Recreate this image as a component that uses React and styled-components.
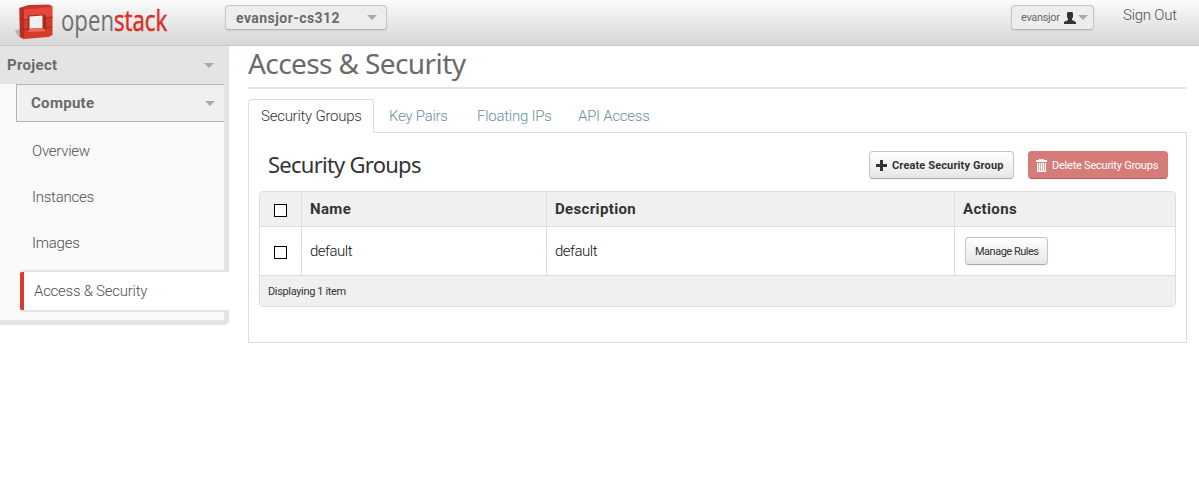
import React from "react";
import styled, { createGlobalStyle, css } from "styled-components";

const GlobalStyle = createGlobalStyle`
  * { box-sizing: border-box; }
  body {
    margin: 0;
    background: #fff;
    color: #333;
    font: 300 15px/20px Roboto, "Liberation Sans", sans-serif;
    letter-spacing: -0.25px;
  }
  h1, h2, ul { margin: 0; padding: 0; list-style: none; }
  a { color: inherit; text-decoration: none; }
`;

const Header = styled.header`
  display: flex;
  align-items: flex-start;
  height: 46px;
  padding: 5px 22px 0 14px;
  border-bottom: 1px solid #c8c8c8;
  background: linear-gradient(#fbfbfb, #d6d6d6);
  color: #505050;
`;

const Logo = styled.div`
  display: flex;
  flex: none;
  width: 158px;
  height: 40px;
  margin: -5px 53px 0 0;
`;

const LogoMark = styled.svg`
  flex: none;
  width: 47px;
  height: 40px;
`;

const Wordmark = styled.div`
  display: flex;
  width: 106px;
  transform: scaleX(0.765);
  transform-origin: 0 0;
  color: #6f7171;
  font: 400 29px/40px "Open Sans", sans-serif;
  letter-spacing: 0;
`;

const WordmarkAccent = styled.span`
  color: #d6322b;
  -webkit-text-stroke: 0.6px #d6322b;
`;

const Picker = styled.button`
  display: flex;
  align-items: center;
  flex: none;
  width: ${(p) => p.$width}px;
  height: 25px;
  padding: 0 9px 0 ${(p) => (p.$small ? 9 : 10)}px;
  border: 1px solid #c6c6c6;
  border-bottom-color: #b5b5b5;
  border-radius: 4px;
  background: #ededed;
  box-shadow: 0 1px 2px rgba(0, 0, 0, 0.08);
  color: #6a6a6a;
  font: ${(p) => (p.$small ? "400 11px" : "700 14px")} Roboto, "Liberation Sans", sans-serif;
  letter-spacing: ${(p) => (p.$small ? -0.35 : 0.45)}px;
  ${(p) => p.$small && css`padding-right: 5px;`}
`;

const Caret = styled.span`
  flex: none;
  margin-left: ${(p) => (p.$tight ? "2px" : "auto")};
  border: 5px solid transparent;
  border-top-color: #a5aaac;
  border-bottom: 0;
`;

const UserIcon = styled.svg`
  flex: none;
  width: 12px;
  height: 12px;
  margin-left: auto;
  fill: #333;
`;

const Spacer = styled.div`
  flex: 1;
`;

const SignOut = styled.a`
  width: 54px;
  margin-left: 29px;
  white-space: nowrap;
`;

const Body = styled.div`
  display: flex;
  align-items: flex-start;
`;

const Sidebar = styled.nav`
  width: 229px;
  height: 279px;
  border-right: 5px solid #e4e4e4;
  border-bottom: 5px solid #e4e4e4;
  border-bottom-right-radius: 5px;
  background: #f9f9f9;
  color: #505050;
`;

const Section = styled.div`
  display: flex;
  align-items: center;
  height: 38px;
  padding: 0 10px 0 7px;
  background: #e4e4e4;
  color: #6a6a6a;
  font-weight: 700;
  letter-spacing: 0.3px;
`;

const SubSection = styled(Section)`
  margin-left: 16px;
  padding: 0 9px 0 14px;
  border: 1px solid #b5b5b5;
  border-right: 0;
  background: #f0f0f0;
`;

const NavList = styled.ul`
  padding-top: 6px;
`;

const NavItem = styled.li`
  height: 46px;
  padding-left: 32px;
  line-height: 46px;

  ${(p) =>
    p.$active &&
    css`
      height: 42px;
      margin: 4px -5px 0 20px;
      padding-left: 14px;
      line-height: 38px;
      border: 2px solid #e4e4e4;
      border-width: 2px 0;
      border-radius: 3px 0 0 3px;
      background: linear-gradient(90deg, #d93a2b 4px, #fff 4px);
    `}
`;

const Main = styled.main`
  width: 939px;
  margin-left: 19px;
`;

const PageTitle = styled.h1`
  height: 43px;
  border-bottom: 2px solid #e4e4e4;
  color: #6a6a6a;
  font: 28px/35px "Noto Sans", sans-serif;
  letter-spacing: -0.6px;
`;

const Tabs = styled.ul`
  display: flex;
  height: 34px;
  margin-top: 10px;
`;

const Tab = styled.li`
  width: ${(p) => p.$width}px;
  height: 34px;
  padding: 0 0 0 15px;
  border-bottom: 1px solid #ddd;
  color: #6a91a0;
  line-height: 34px;
  white-space: nowrap;

  ${(p) =>
    p.$active &&
    css`
      padding-left: 12px;
      border: 1px solid #ddd;
      border-bottom: 0;
      border-radius: 4px 4px 0 0;
      color: #333;
      line-height: 32px;
    `}
`;

const TabLine = styled.li`
  flex: 1;
  border-bottom: 1px solid #ddd;
`;

const Panel = styled.section`
  height: 210px;
  padding: 18px 10px 0;
  border: 1px solid #ddd;
  border-top: 0;
`;

const PanelHead = styled.div`
  display: flex;
  height: 28px;
  margin-bottom: 12px;
  padding: 0 8px 0 9px;
  gap: 14px;
`;

const PanelTitle = styled.h2`
  flex: 1;
  font: 22px/26px "Noto Sans", sans-serif;
  letter-spacing: -0.75px;
`;

const Button = styled.button`
  display: flex;
  align-items: center;
  width: ${(p) => p.$width}px;
  height: 28px;
  padding: 0 0 0 ${(p) => p.$pad}px;
  gap: 5px;
  border: 1px solid #c4c4c4;
  border-bottom-color: #aaa;
  border-radius: 4px;
  background: linear-gradient(#fff, #e6e6e6);
  box-shadow: 0 1px 2px rgba(0, 0, 0, 0.06);
  color: #333;
  font: ${(p) => (p.$strong ? 700 : 400)} 11px Roboto, "Liberation Sans", sans-serif;
  letter-spacing: ${(p) => (p.$strong ? 0.13 : p.$danger ? -0.23 : -0.5)}px;
  white-space: nowrap;

  ${(p) =>
    p.$danger &&
    css`
      border-color: #d47b77 #d47b77 #b16360;
      background: #d67c78;
      color: #fff;
    `}

  svg { flex: none; display: block; }
`;

const Grid = styled.div`
  border: 1px solid #ddd;
  border-radius: 4px;
  overflow: hidden;
`;

const Row = styled.div`
  display: grid;
  grid-template-columns: 42px 245px 408px 1fr;
  height: ${(p) => (p.$head ? 35 : 49)}px;
  border-bottom: 1px solid #ddd;
  background: ${(p) => (p.$head ? "#f0f0f0" : "#fff")};
  color: ${(p) => (p.$head ? "#333" : "#111")};
  font-weight: ${(p) => (p.$head ? 700 : 300)};
  letter-spacing: ${(p) => (p.$head ? 0.35 : -0.5)}px;
`;

const Cell = styled.div`
  display: flex;
  align-items: center;
  padding: 0 8px;
  border-right: 1px solid #ddd;
  &:last-child { border-right: 0; }
`;

const CheckCell = styled(Cell)`
  padding: 3px 0 0 14px;
`;

const ActionCell = styled(Cell)`
  padding-left: 10px;
`;

const Checkbox = styled.input`
  appearance: none;
  width: 13px;
  height: 13px;
  margin: 0;
  border: 1px solid #000;
  background: #fff;
`;

const Footer = styled.div`
  height: 30px;
  padding-left: 8px;
  background: #f0f0f0;
  font-size: 11px;
  font-weight: 400;
  line-height: 31px;
  letter-spacing: -0.35px;
`;

function OpenStackLogo() {
  return (
    <Logo aria-label="openstack">
      <LogoMark viewBox="14 0 47 40">
        <path d="M15 30.500 20 29V38L17.500 35Z" fill="#999" opacity=".65" />
        <path d="M19.500 8 29 5 49 4.800 52.500 6.500V35L48.500 37 24 39 20 37Z" fill="#d63a2a" />
        <path d="M19.500 8 29 5 49 4.800 52.500 6.500 24 9.500Z" fill="#c8352b" />
        <path d="M24 9.500 52 7V16.500L24 19Z" fill="#e5493d" />
        <path d="M19.500 8 24 9.500V39L20 37Z" fill="#b92e24" />
        <path d="M28 15.500 42.500 14.500 46 15.500V30L28 32Z" fill="#a32a22" />
        <path d="M29.500 16.500 42.500 15.500V28L29.500 28.700Z" fill="#f0f0f0" />
        <path d="M28 32 29.500 28.700 42.500 28 46 30.500 45 31.300Z" fill="#ec6a5c" />
        <path d="M19.500 18.500 24 20 28 19.500M20 28 24 29.500 28 29M46 18 52.500 17M46 28 52.500 27" fill="none" stroke="#99241c" strokeWidth=".8" />
      </LogoMark>
      <Wordmark>
        <span>open</span>
        <WordmarkAccent>stack</WordmarkAccent>
      </Wordmark>
    </Logo>
  );
}

function PlusIcon() {
  return (
    <svg width="11" height="11" viewBox="0 0 11 11" fill="#333">
      <path d="M4 0h3v4h4v3H7v4H4V7H0V4h4z" />
    </svg>
  );
}

function TrashIcon() {
  return (
    <svg width="11" height="13" viewBox="0 0 11 13" fill="#fff">
      <path fillRule="evenodd" d="M3 0h5v1h3v2H0V1h3zM4 1h3V.8H4z" />
      <path d="M1 4h9v9H1z" opacity=".35" />
      <path d="M1 4h1v9H1zM3 4h1v9H3zM5 4h1v9H5zM7 4h1v9H7zM9 4h1v9H9zM1 12h9v1H1z" />
    </svg>
  );
}

export default function App() {
  return (
    <>
      <GlobalStyle />
      <Header>
        <OpenStackLogo />
        <Picker $width={162}>evansjor-cs312<Caret /></Picker>
        <Spacer />
        <Picker $width={83} $small>
          evansjor
          <UserIcon viewBox="0 0 12 12">
            <path d="M4 0h4l1 1v4L8 7v1l4 2v2H0v-2l4-2V7L3 5V1z" />
          </UserIcon>
          <Caret $tight />
        </Picker>
        <SignOut href="#">Sign Out</SignOut>
      </Header>
      <Body>
        <Sidebar>
          <Section>Project<Caret /></Section>
          <SubSection>Compute<Caret /></SubSection>
          <NavList>
            <NavItem>Overview</NavItem>
            <NavItem>Instances</NavItem>
            <NavItem>Images</NavItem>
            <NavItem $active>Access &amp; Security</NavItem>
          </NavList>
        </Sidebar>
        <Main>
          <PageTitle>Access &amp; Security</PageTitle>
          <Tabs>
            <Tab $width={126} $active>Security Groups</Tab>
            <Tab $width={88}>Key Pairs</Tab>
            <Tab $width={101}>Floating IPs</Tab>
            <Tab $width={102}>API Access</Tab>
            <TabLine />
          </Tabs>
          <Panel>
            <PanelHead>
              <PanelTitle>Security Groups</PanelTitle>
              <Button $width={145} $pad={6} $strong><PlusIcon />Create Security Group</Button>
              <Button $width={140} $pad={7} $danger><TrashIcon />Delete Security Groups</Button>
            </PanelHead>
            <Grid>
              <Row $head>
                <CheckCell><Checkbox type="checkbox" /></CheckCell>
                <Cell>Name</Cell>
                <Cell>Description</Cell>
                <Cell>Actions</Cell>
              </Row>
              <Row>
                <CheckCell><Checkbox type="checkbox" /></CheckCell>
                <Cell>default</Cell>
                <Cell>default</Cell>
                <ActionCell><Button $width={83} $pad={9}>Manage Rules</Button></ActionCell>
              </Row>
              <Footer>Displaying 1 item</Footer>
            </Grid>
          </Panel>
        </Main>
      </Body>
    </>
  );
}
